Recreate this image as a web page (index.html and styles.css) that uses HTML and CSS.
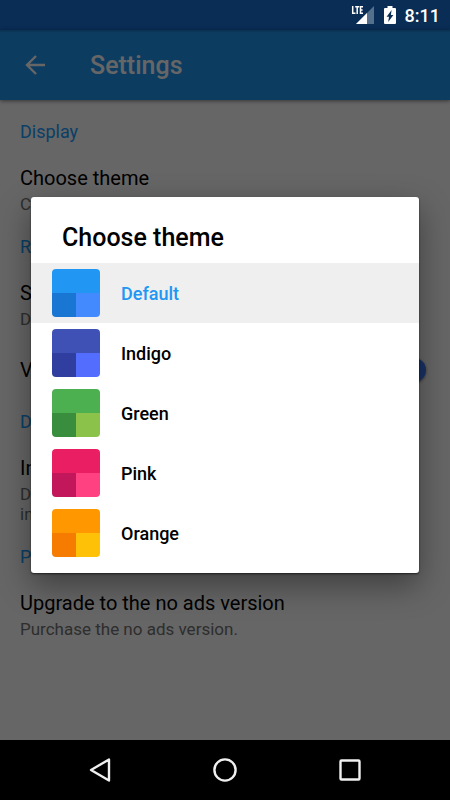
FILE: index.html
```html
<!DOCTYPE html>
<html lang="en">
<head>
<meta charset="utf-8">
<meta name="viewport" content="width=device-width, initial-scale=1">
<title>Settings</title>
<link rel="stylesheet" href="styles.css">
</head>
<body>
<div class="status">
  <svg class="signal" width="24" height="20" viewBox="0 0 24 20" role="img" aria-label="LTE signal">
    <path d="M23 1V19H5Z" fill="#54708c"/>
    <path d="M16 8V19H5Z" fill="#fff"/>
    <path d="M1.700 1V8.200H4.500M4.200 1.800H8.200M6.200 1.800V9M12 1.800H9.500V8.200H12M9.500 5H11.600" fill="none" stroke="#fff" stroke-width="1.500"/>
  </svg>
  <svg class="battery" width="12" height="20" viewBox="0 0 12 20" role="img" aria-label="Battery charging">
    <path d="M3.500 1H8.500V3H11Q12 3 12 4V18Q12 19 11 19H1Q0 19 0 18V4Q0 3 1 3H3.500Z" fill="#fff"/>
    <path d="M7.600 5 2.600 11.700H5L4.200 17 9.400 10H6.900Z" fill="#0a2d55"/>
  </svg>
  <span>8:11</span>
</div>
<main class="app">
  <header class="toolbar">
    <button class="back" aria-label="Back">
      <svg width="20" height="20" viewBox="0 0 20 20"><path d="M20 10H2M11 1 2 10 11 19" fill="none" stroke="#fff" stroke-width="2.400"/></svg>
    </button>
    <h1>Settings</h1>
  </header>
  <div class="settings">
    <h2>Display</h2>
    <section class="item"><h3>Choose theme</h3><p>C</p></section>
    <h2>R</h2>
    <section class="item"><h3>S</h3><p>D</p></section>
    <label class="item toggle"><span>V</span><input type="checkbox" role="switch" checked></label>
    <h2>D</h2>
    <section class="item"><h3>In</h3><p>D<br>in</p></section>
    <h2>P</h2>
    <section class="item"><h3>Upgrade to the no ads version</h3><p>Purchase the no ads version.</p></section>
  </div>
  <div class="scrim">
    <div class="dialog" role="dialog" aria-labelledby="dialog-title">
      <h2 class="dialog-title" id="dialog-title">Choose theme</h2>
      <button class="theme selected"><span class="swatch blue"></span>Default</button>
      <button class="theme"><span class="swatch indigo"></span>Indigo</button>
      <button class="theme"><span class="swatch green"></span>Green</button>
      <button class="theme"><span class="swatch pink"></span>Pink</button>
      <button class="theme"><span class="swatch orange"></span>Orange</button>
    </div>
  </div>
</main>
<nav class="nav">
  <button aria-label="Back"><svg width="24" height="24" viewBox="0 0 24 24"><path d="M21 1.500V22.500L3 12Z"/></svg></button>
  <button aria-label="Home"><svg width="24" height="24" viewBox="0 0 24 24"><circle cx="12" cy="12" r="10.600"/></svg></button>
  <button aria-label="Overview"><svg width="24" height="24" viewBox="0 0 24 24"><rect x="2.500" y="2.500" width="19" height="19" rx="1"/></svg></button>
</nav>
</body>
</html>
```
FILE: styles.css
```css
* { box-sizing: border-box; }

body {
  margin: 0;
  min-height: 100vh;
  display: flex;
  flex-direction: column;
  font-family: Roboto, sans-serif;
  font-size: 18px;
  background: #000;
}

h1, h2, h3, p { margin: 0; font-weight: 400; }

button {
  border: 0;
  padding: 0;
  background: none;
  font: inherit;
  text-align: left;
}

svg { display: block; }

.status {
  height: 30px;
  padding-right: 10px;
  display: flex;
  justify-content: flex-end;
  align-items: center;
  background: #0a2d55;
  color: #fff;
  font-weight: 500;
}

.signal { margin-right: 9px; }
.battery { margin-right: 9px; }

.app {
  flex: 1;
  position: relative;
  background: #fff;
}

.toolbar {
  height: 70px;
  padding-left: 25px;
  display: flex;
  align-items: center;
  gap: 45px;
  background: #2196f3;
  color: #fff;
  box-shadow: 0 1px 4px rgba(0, 0, 0, 0.5);
}

.toolbar h1 {
  padding-top: 2px;
  font-size: 25px;
  font-weight: 500;
  line-height: 32px;
}

.settings {
  padding: 13px 24px 0 20px;
  line-height: 20px;
}

.settings h2 {
  padding: 9px 0;
  font-size: 18px;
  color: #1a9dff;
}

.item { padding: 15px 0 14px; }

.item h3, .toggle {
  font-size: 20px;
  line-height: 24px;
  color: #000;
}

.item p {
  margin-top: 4px;
  font-size: 17px;
  color: #737373;
}

.toggle {
  height: 60px;
  display: flex;
  justify-content: space-between;
  align-items: flex-start;
}

.toggle input {
  appearance: none;
  width: 24px;
  height: 24px;
  margin: 0;
  border-radius: 50%;
  background: #3d7fff;
  box-shadow: 0 1px 3px rgba(0, 0, 0, 0.5);
}

.scrim {
  position: absolute;
  inset: 0;
  padding: 0 31px;
  display: flex;
  align-items: center;
  background: linear-gradient(rgba(0, 0, 0, 0.2), transparent 3px) rgba(0, 0, 0, 0.6);
}

.dialog {
  flex: 1;
  padding-bottom: 10px;
  border-radius: 3px;
  background: #fff;
  color: #000;
  box-shadow: 0 1px 2px rgba(0, 0, 0, 0.6), 0 12px 32px rgba(0, 0, 0, 0.4);
}

.dialog-title {
  padding: 25px 31px 9px;
  font-size: 25px;
  font-weight: 500;
  line-height: 32px;
}

.theme {
  width: 100%;
  height: 60px;
  padding-left: 21px;
  display: flex;
  align-items: center;
  gap: 21px;
  color: #000;
  font-weight: 500;
}

.selected { background: #efefef; color: #2196f3; }

.swatch {
  width: 48px;
  height: 48px;
  border-radius: 4px;
  background: linear-gradient(var(--main) 50%, transparent 50%),
    linear-gradient(90deg, var(--dark) 50%, var(--accent) 50%);
}

.blue { --main: #2196f3; --dark: #1976d2; --accent: #448aff; }
.indigo { --main: #3f51b5; --dark: #303f9f; --accent: #536dfe; }
.green { --main: #4caf50; --dark: #388e3c; --accent: #8bc34a; }
.pink { --main: #e91e63; --dark: #c2185b; --accent: #ff4081; }
.orange { --main: #ff9800; --dark: #f57c00; --accent: #ffc107; }

.nav {
  height: 60px;
  display: flex;
  justify-content: center;
  align-items: center;
  gap: 101px;
}

.nav path, .nav circle, .nav rect {
  fill: none;
  stroke: #f0f0f0;
  stroke-width: 2.400;
  stroke-linejoin: round;
}
```
